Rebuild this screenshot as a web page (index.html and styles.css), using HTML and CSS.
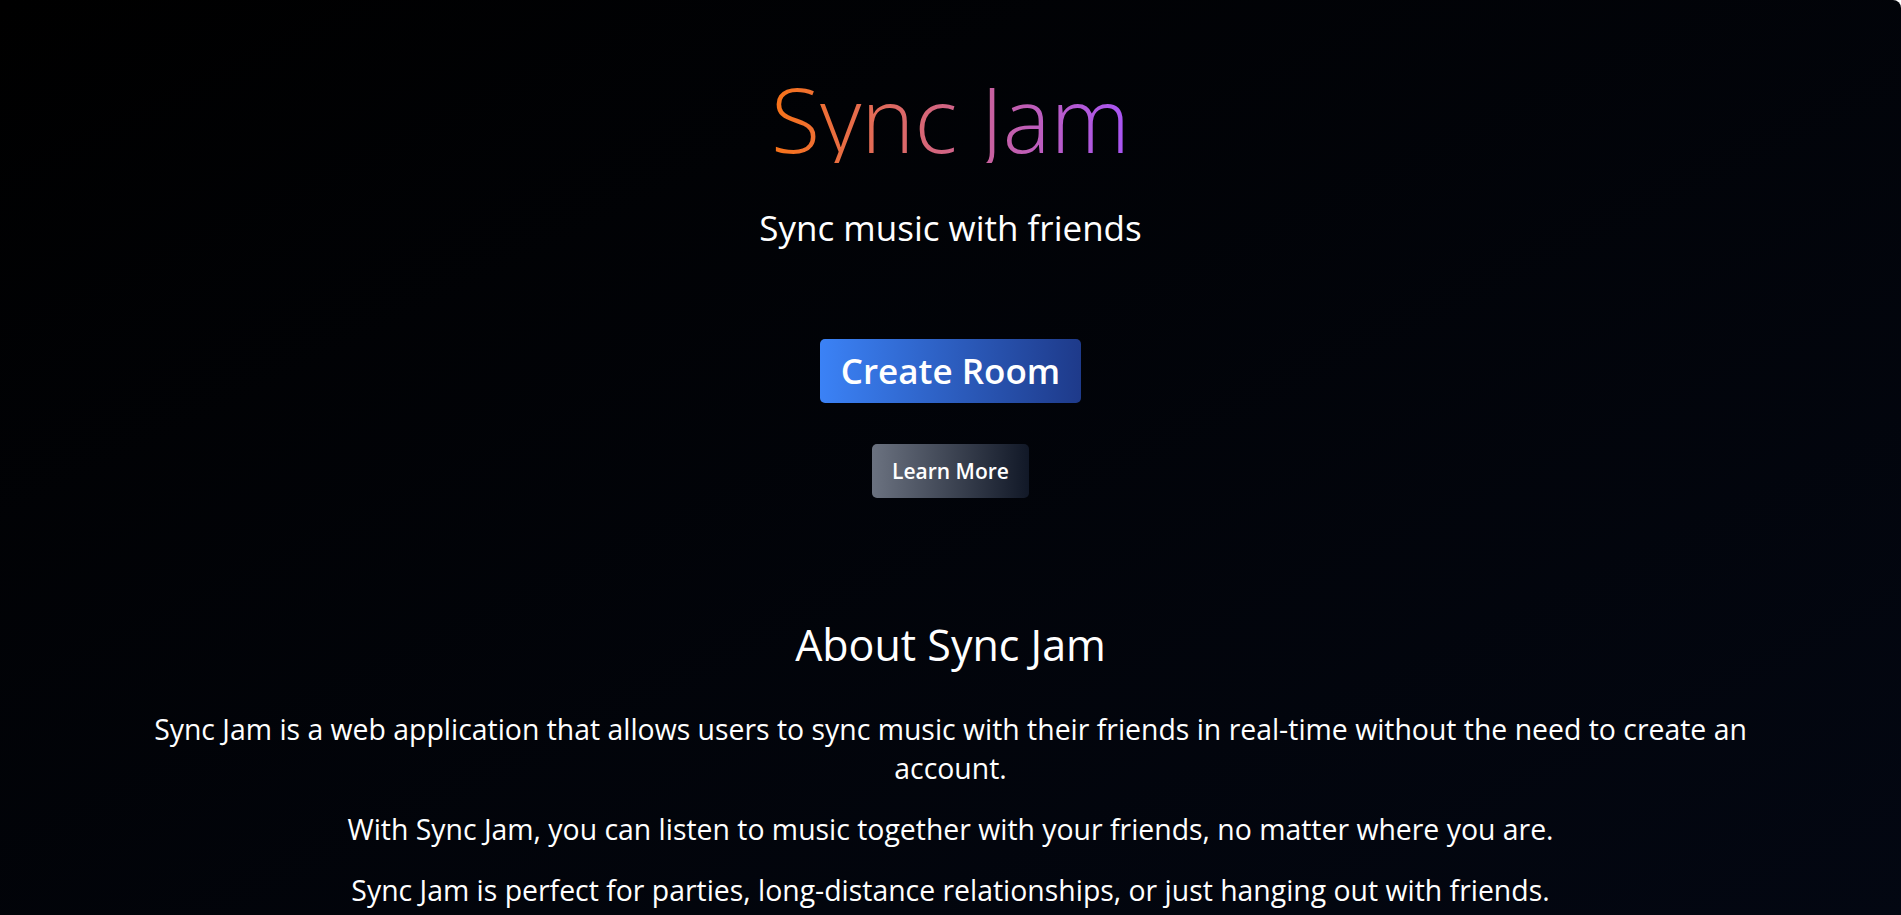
FILE: index.html
```html
<!DOCTYPE html>
<html lang="en">
<head>
<meta charset="utf-8">
<title>Sync Jam</title>
<link rel="stylesheet" href="styles.css">
</head>
<body>
<main class="page">
  <section class="hero">
    <h1 class="title">Sync Jam</h1>
    <p class="tagline">Sync music with friends</p>
    <button class="btn btn-create">Create Room</button>
    <button class="btn btn-learn">Learn More</button>
  </section>
  <section class="about">
    <h2 class="about-title">About Sync Jam</h2>
    <p class="about-text">Sync Jam is a web application that allows users to sync music with their friends in real-time without the need to create an account.</p>
    <p class="about-text">With Sync Jam, you can listen to music together with your friends, no matter where you are.</p>
    <p class="about-text">Sync Jam is perfect for parties, long-distance relationships, or just hanging out with friends.</p>
  </section>
</main>
</body>
</html>
```
FILE: styles.css
```css
html, body {
  margin: 0;
  padding: 0;
  background: #ffffff;
}
body {
  font-family: "Open Sans", "Noto Sans", sans-serif;
  color: #ffffff;
}
.page {
  min-height: 915px;
  box-sizing: border-box;
  background: linear-gradient(to bottom right, #000000, #030712);
  border-top-right-radius: 8px;
  overflow: hidden;
  display: flex;
  flex-direction: column;
  align-items: center;
  padding-top: 73px;
}
.hero {
  display: flex;
  flex-direction: column;
  align-items: center;
}
.title {
  margin: 0;
  font-size: 90px;
  line-height: 90px;
  font-weight: 300;
  background: linear-gradient(to right, #f97316, #a855f7);
  -webkit-background-clip: text;
  background-clip: text;
  color: transparent;
}
.tagline {
  margin: 45px 0 0;
  font-size: 35px;
  line-height: 40px;
  font-weight: 400;
}
.btn {
  border: none;
  color: #ffffff;
  font-family: inherit;
  font-weight: 600;
  cursor: pointer;
  border-radius: 5px;
}
.btn-create {
  margin-top: 91px;
  font-size: 35px;
  line-height: 40px;
  padding: 12px 21px;
  background: linear-gradient(to right, #3b82f6, #1e3a8a);
}
.btn-learn {
  margin-top: 41px;
  font-size: 21px;
  line-height: 30px;
  padding: 12px 20px;
  background: linear-gradient(to right, #6b7280, #111827);
}
.about {
  margin-top: 123px;
  width: 100%;
  box-sizing: border-box;
  padding: 0 125px;
  text-align: center;
}
.about-title {
  margin: 0 0 41px;
  font-size: 43px;
  line-height: 48px;
  font-weight: 400;
}
.about-text {
  margin: 0 0 22px;
  font-size: 28.4px;
  line-height: 39px;
  font-weight: 400;
}
```
